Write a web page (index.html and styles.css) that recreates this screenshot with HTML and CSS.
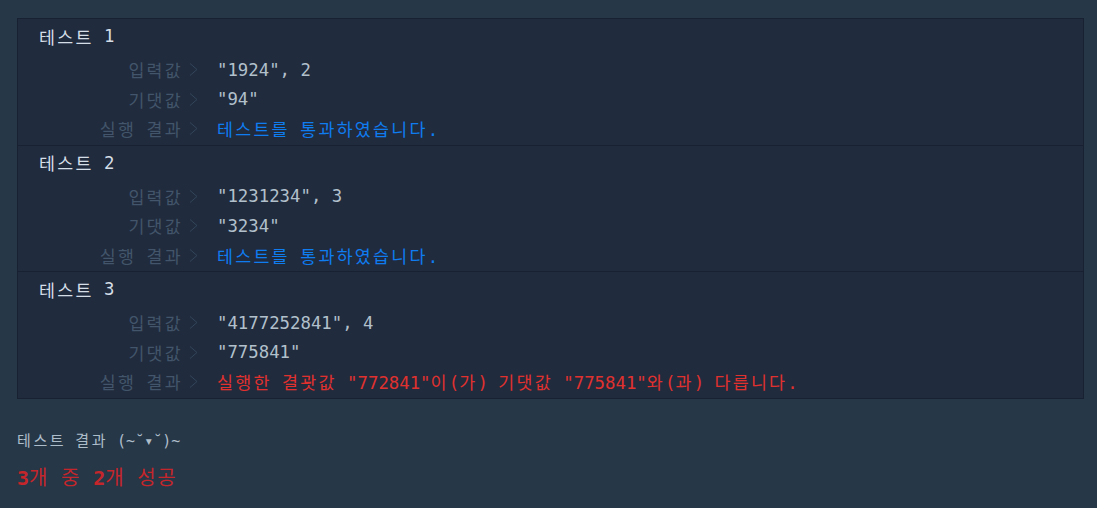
FILE: index.html
```html
<!DOCTYPE html>
<html lang="ko">
<head>
<meta charset="utf-8">
<link rel="stylesheet" href="styles.css">
</head>
<body>
<div class="console">
  <div class="case">
    <div class="case-title"><span class="k">테스트</span> 1</div>
    <div class="row"><span class="label"><span class="k">입력값</span></span><svg class="chev" width="9" height="13" viewBox="0 0 9 13"><polyline points="1,0.5 8,6.5 1,12.5"/></svg><span class="value">"1924", 2</span></div>
    <div class="row"><span class="label"><span class="k">기댓값</span></span><svg class="chev" width="9" height="13" viewBox="0 0 9 13"><polyline points="1,0.5 8,6.5 1,12.5"/></svg><span class="value">"94"</span></div>
    <div class="row"><span class="label"><span class="k">실행</span> <span class="k">결과</span></span><svg class="chev" width="9" height="13" viewBox="0 0 9 13"><polyline points="1,0.5 8,6.5 1,12.5"/></svg><span class="value pass"><span class="k">테스트를</span> <span class="k">통과하였습니다</span>.</span></div>
  </div>
  <div class="case">
    <div class="case-title"><span class="k">테스트</span> 2</div>
    <div class="row"><span class="label"><span class="k">입력값</span></span><svg class="chev" width="9" height="13" viewBox="0 0 9 13"><polyline points="1,0.5 8,6.5 1,12.5"/></svg><span class="value">"1231234", 3</span></div>
    <div class="row"><span class="label"><span class="k">기댓값</span></span><svg class="chev" width="9" height="13" viewBox="0 0 9 13"><polyline points="1,0.5 8,6.5 1,12.5"/></svg><span class="value">"3234"</span></div>
    <div class="row"><span class="label"><span class="k">실행</span> <span class="k">결과</span></span><svg class="chev" width="9" height="13" viewBox="0 0 9 13"><polyline points="1,0.5 8,6.5 1,12.5"/></svg><span class="value pass"><span class="k">테스트를</span> <span class="k">통과하였습니다</span>.</span></div>
  </div>
  <div class="case">
    <div class="case-title"><span class="k">테스트</span> 3</div>
    <div class="row"><span class="label"><span class="k">입력값</span></span><svg class="chev" width="9" height="13" viewBox="0 0 9 13"><polyline points="1,0.5 8,6.5 1,12.5"/></svg><span class="value">"4177252841", 4</span></div>
    <div class="row"><span class="label"><span class="k">기댓값</span></span><svg class="chev" width="9" height="13" viewBox="0 0 9 13"><polyline points="1,0.5 8,6.5 1,12.5"/></svg><span class="value">"775841"</span></div>
    <div class="row"><span class="label"><span class="k">실행</span> <span class="k">결과</span></span><svg class="chev" width="9" height="13" viewBox="0 0 9 13"><polyline points="1,0.5 8,6.5 1,12.5"/></svg><span class="value fail"><span class="k">실행한</span> <span class="k">결괏값</span> "772841"<span class="k">이</span>(<span class="k">가</span>) <span class="k">기댓값</span> "775841"<span class="k">와</span>(<span class="k">과</span>) <span class="k">다릅니다</span>.</span></div>
  </div>
</div>
<div class="summary">
  <div class="summary-title"><span class="k">테스트</span> <span class="k">결과</span> (~˘▾˘)~</div>
  <div class="summary-count"><b>3</b><span class="k">개</span> <span class="k">중</span> <b>2</b><span class="k">개</span> <span class="k">성공</span></div>
</div>
</body>
</html>
```

FILE: styles.css
```css
html, body {
  margin: 0;
  padding: 0;
  background: #263747;
}
body {
  padding: 18px 13px 0 17px;
  font-family: "DejaVu Sans Mono", "Noto Sans CJK KR", monospace;
  font-size: 17.33px;
  color: #b2c0cc;
}
.k {
  font-family: "Noto Sans CJK KR", sans-serif;
  letter-spacing: 2.26px;
}
.console {
  background: #202b3d;
  border: 1px solid #172131;
}
.case {
  padding: 5px 0 1px;
  border-bottom: 1px solid #172131;
}
.case:last-child {
  border-bottom: none;
}
.case-title {
  display: flex;
  align-items: center;
  height: 24px;
  padding-left: 21px;
  margin-bottom: 7px;
  color: #d5dee7;
  white-space: pre;
}
.row {
  display: flex;
  align-items: center;
  height: 29.5px;
  white-space: pre;
}
.label {
  width: 165px;
  text-align: right;
  color: #42556a;
}
.chev {
  margin-left: 6px;
  fill: none;
  stroke: #33455a;
  stroke-width: 1;
}
.value {
  margin-left: 19px;
  color: #b2c0cc;
}
.pass { color: #0f7cf0; }
.fail { color: #e0312f; }
.summary {
  padding-top: 29px;
}
.summary-title {
  font-size: 15px;
  line-height: 24px;
  color: #aebdca;
  white-space: pre;
}
.summary-title .k {
  letter-spacing: 2.6px;
}
.summary-count {
  margin-top: 10px;
  font-size: 20px;
  line-height: 28px;
  color: #c4262b;
  white-space: pre;
}
.summary-count .k {
  letter-spacing: 1.6px;
}
```
